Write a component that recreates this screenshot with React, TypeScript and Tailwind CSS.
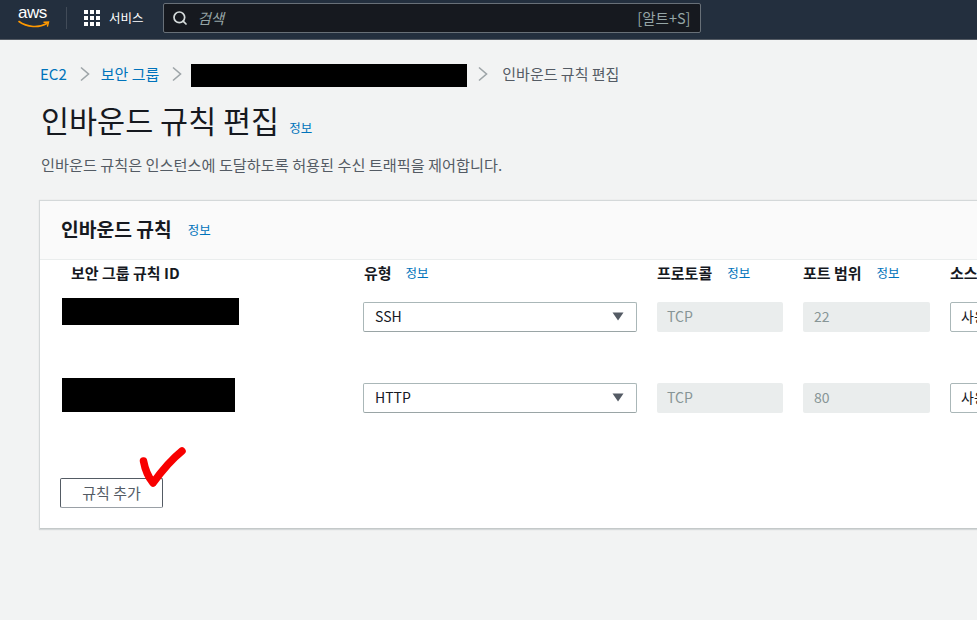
import { Search } from 'lucide-react';

const font = "[font-family:'Noto_Sans_CJK_KR','Noto_Sans',sans-serif]";

// small blue "정보" link used next to headings
const Info = ({ className = '' }: { className?: string }) => (
  <span className={`text-[12.5px] leading-none text-[#0073bb] ${className}`}>정보</span>
);

const Chevron = () => (
  <svg width="12" height="16" viewBox="0 0 12 16" fill="none" className="shrink-0">
    <path d="M2 1.5 9.5 8 2 14.5" stroke="#9ea5a8" strokeWidth="1.6" />
  </svg>
);

const AwsLogo = () => (
  <div className="relative h-[30px] w-[32px]">
    <span className="absolute left-0 top-[1px] font-['Liberation_Sans'] text-[17px] leading-[17px] tracking-[-0.5px] text-white">
      aws
    </span>
    <svg width="32" height="10" viewBox="0 0 32 10" fill="none" className="absolute left-0 top-[17px]">
      <path d="M1 1.5C9 7.5 21 8 29 3.5" stroke="#f90" strokeWidth="1.6" strokeLinecap="round" />
      <path d="M26 2.2 30.5 2 29.5 6" stroke="#f90" strokeWidth="1.4" strokeLinecap="round" />
    </svg>
  </div>
);

const Grid9 = () => (
  <div className="grid grid-cols-3 gap-[2px]">
    {Array.from({ length: 9 }).map((_, i) => (
      <span key={i} className="h-[4px] w-[4px] bg-white" />
    ))}
  </div>
);

const Rule = ({ type, port, idClass }: { type: string; port: string; idClass: string }) => (
  <div className="flex h-[81px] items-start">
    <div className="w-[323px] shrink-0 pl-[22px]">
      <div className={`bg-black ${idClass}`} />
    </div>
    <div className="flex h-[30px] w-[274px] shrink-0 items-center justify-between rounded-[2px] border border-[#aab7b8] border-b-[#9aa5a6] bg-white pb-[2px] pl-[11px] pr-[12px] text-[14px] text-[#16191f]">
      <span>{type}</span>
      <svg width="12" height="9" viewBox="0 0 12 9">
        <path d="M0.5 0.5h11L6 8.5z" fill="#545b64" />
      </svg>
    </div>
    <div className="ml-[20px] flex h-[30px] w-[126px] shrink-0 items-center rounded-[2px] bg-[#eaeded] pb-[2px] pl-[10px] text-[14px] text-[#879596]">
      TCP
    </div>
    <div className="ml-[20px] flex h-[30px] w-[127px] shrink-0 items-center rounded-[2px] bg-[#eaeded] pb-[2px] pl-[11px] text-[14px] text-[#879596]">
      {port}
    </div>
    <div className="ml-[20px] flex h-[30px] w-[200px] shrink-0 items-center rounded-[2px] border border-[#aab7b8] bg-white pb-[2px] pl-[10px] text-[14px] text-[#16191f]">
      사용자 지정
    </div>
  </div>
);

export default function App() {
  return (
    <div className={`relative h-[620px] w-[977px] overflow-hidden bg-[#f2f3f3] ${font}`}>
      {/* Top nav */}
      <header className="flex h-[40px] items-center border-b border-[#545b64] bg-[#232f3e] pb-[3px] pl-[18px]">
        <AwsLogo />
        <div className="ml-[16px] h-[22px] w-px bg-[#414b58]" />
        <div className="ml-[17px]">
          <Grid9 />
        </div>
        <span className="ml-[9px] text-[12.5px] text-white">서비스</span>
        <div className="ml-[19px] flex h-[30px] w-[538px] items-center rounded-[2px] border border-[#687078] bg-[#16191f] pl-[8px] pr-[9px]">
          <Search size={16} strokeWidth={2.6} className="text-[#d5dbdb]" />
          <span className="ml-[10px] flex-1 text-[14.5px] italic text-[#95a5a6]">검색</span>
          <span className="text-[14.5px] text-[#95a5a6]">[알트+S]</span>
        </div>
      </header>

      <main className="px-[40px]">
        {/* Breadcrumb */}
        <nav className="mt-[22px] flex h-[24px] items-center text-[15px]">
          <span className="text-[#0073bb]">EC2</span>
          <span className="ml-[12px]"><Chevron /></span>
          <span className="ml-[10px] text-[#0073bb]">보안 그룹</span>
          <span className="ml-[12px]"><Chevron /></span>
          <div className="ml-[8px] mt-[2px] h-[23px] w-[276px] bg-black" />
          <span className="ml-[10px]"><Chevron /></span>
          <span className="ml-[13px] text-[#545b64]">인바운드 규칙 편집</span>
        </nav>

        {/* Title */}
        <div className="mt-[15px] flex items-end pl-[1px]">
          <h1 className="text-[30.5px] font-normal leading-[38px] text-[#16191f]">인바운드 규칙 편집</h1>
          <Info className="mb-[5px] ml-[10px]" />
        </div>
        <p className="mt-[15px] pl-[1px] text-[15.2px] leading-[20px] text-[#545b64]">
          인바운드 규칙은 인스턴스에 도달하도록 허용된 수신 트래픽을 제어합니다.
        </p>

        {/* Card */}
        <section className="mt-[27px] h-[328px] w-[1000px] border-b border-[#c4c9c9] bg-white shadow-[0_0_1px_1px_rgba(0,28,36,0.12)]">
          <div className="flex h-[59px] items-center border-b border-[#eaeded] bg-[#fafafa] pb-[2px] pl-[21px]">
            <h2 className="text-[19.3px] font-bold text-[#16191f]">인바운드 규칙</h2>
            <Info className="ml-[16px] mt-[3px]" />
          </div>

          <div className="flex h-[42px] items-start pt-[3px] text-[15px] font-bold leading-[20px] text-[#16191f]">
            <div className="w-[323px] shrink-0 pl-[31px]">보안 그룹 규칙 ID</div>
            <div className="flex w-[294px] shrink-0 items-center pl-[1px]">
              유형<Info className="ml-[14px] mt-[1px] font-normal" />
            </div>
            <div className="flex w-[146px] shrink-0 items-center">
              프로토콜<Info className="ml-[15px] mt-[1px] font-normal" />
            </div>
            <div className="flex w-[147px] shrink-0 items-center">
              포트 범위<Info className="ml-[15px] mt-[1px] font-normal" />
            </div>
            <div>소스</div>
          </div>

          <Rule type="SSH" port="22" idClass="-mt-[4px] h-[27px] w-[177px]" />
          <Rule type="HTTP" port="80" idClass="-mt-[5px] h-[34px] w-[173px]" />

          <button className="ml-[20px] mt-[14px] h-[30px] w-[103px] rounded-[2px] border border-[#545b64] border-b-[#9aa0a6] bg-white text-[15px] text-[#545b64]">
            규칙 추가
          </button>
        </section>
      </main>

      {/* Hand-drawn red check mark over the button */}
      <svg width="60" height="50" viewBox="0 0 60 50" fill="none" className="absolute left-[135px] top-[442px]">
        <path d="M8.5 19C10 27 14 36 18 41C26 30 37 17 47 9" stroke="#f80000" strokeWidth="7.5" strokeLinecap="round" strokeLinejoin="round" />
      </svg>
    </div>
  );
}
